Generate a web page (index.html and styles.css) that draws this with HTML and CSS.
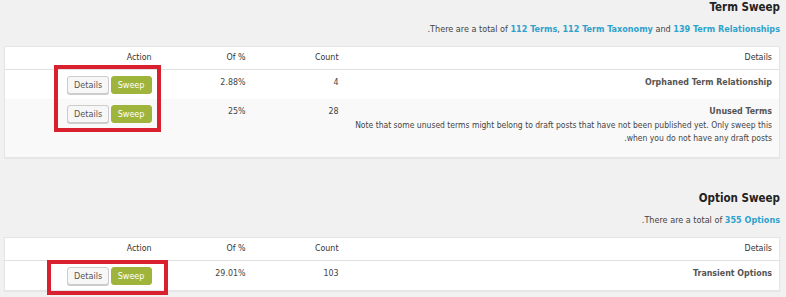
FILE: index.html
```html
<!DOCTYPE html>
<html lang="en" dir="rtl">
<head>
  <meta charset="UTF-8">
  <meta name="viewport" content="width=device-width, initial-scale=1.0">
  <title>WP-Sweep</title>
  <link rel="stylesheet" href="styles.css">
</head>
<body>
  <div class="wrap">
    <h3 class="section-title">Term Sweep</h3>
    <p class="summary">There are a total of <a href="#">112 Terms</a>, <a href="#">112 Term Taxonomy</a> and <a href="#">139 Term Relationships</a>.</p>
    <table class="widefat">
      <colgroup>
        <col class="col-details">
        <col class="col-count">
        <col class="col-percent">
        <col class="col-action">
      </colgroup>
      <thead>
        <tr>
          <th>Details</th>
          <th>Count</th>
          <th><span dir="ltr">Of %</span></th>
          <th>Action</th>
        </tr>
      </thead>
      <tbody>
        <tr>
          <td><strong>Orphaned Term Relationship</strong></td>
          <td>4</td>
          <td>2.88%</td>
          <td class="actions">
            <button class="btn btn-sweep">Sweep</button>
            <button class="btn btn-details">Details</button>
          </td>
        </tr>
        <tr class="alternate">
          <td>
            <strong>Unused Terms</strong>
            <p class="note">Note that some unused terms might belong to draft posts that have not been published yet. Only sweep this when you do not have any draft posts.</p>
          </td>
          <td>28</td>
          <td>25%</td>
          <td class="actions">
            <button class="btn btn-sweep">Sweep</button>
            <button class="btn btn-details">Details</button>
          </td>
        </tr>
      </tbody>
    </table>

    <h3 class="section-title next">Option Sweep</h3>
    <p class="summary">There are a total of <a href="#">355 Options</a>.</p>
    <table class="widefat">
      <colgroup>
        <col class="col-details">
        <col class="col-count">
        <col class="col-percent">
        <col class="col-action">
      </colgroup>
      <thead>
        <tr>
          <th>Details</th>
          <th>Count</th>
          <th><span dir="ltr">Of %</span></th>
          <th>Action</th>
        </tr>
      </thead>
      <tbody>
        <tr>
          <td><strong>Transient Options</strong></td>
          <td>103</td>
          <td>29.01%</td>
          <td class="actions">
            <button class="btn btn-sweep">Sweep</button>
            <button class="btn btn-details">Details</button>
          </td>
        </tr>
      </tbody>
    </table>

    <!-- highlight boxes drawn over the action buttons -->
    <div class="highlight highlight-terms"></div>
    <div class="highlight highlight-options"></div>
  </div>
</body>
</html>
```

FILE: styles.css
```css
html {
  background-color: #f1f1f1;
}

body {
  margin: 0;
  font-family: "DejaVu Sans Condensed", "DejaVu Sans", sans-serif;
  font-size: 9px;
  line-height: 13px;
  color: #444;
  overflow: hidden;
}

.wrap {
  position: relative;
  height: 297px;
  padding: 0 6px 0 5px;
}

.section-title {
  margin: 0;
  font-size: 11.5px;
  line-height: 14px;
  font-weight: bold;
  color: #222;
}

.section-title.next {
  margin-top: 33px;
}

.summary {
  margin: 8px 0 10px;
  line-height: 14px;
}

.summary a {
  color: #2ea2cc;
  font-weight: bold;
  text-decoration: none;
}

.widefat {
  width: 775px;
  table-layout: fixed;
  border-collapse: collapse;
  border: 1px solid #e5e5e5;
  background-color: #fff;
  box-shadow: 0 1px 1px rgba(0, 0, 0, 0.04);
  font-size: 8.8px;
}

.col-details {
  width: 434px;
}

.col-count {
  width: 93px;
}

.col-percent {
  width: 94px;
}

.col-action {
  width: 154px;
}

.widefat th {
  padding: 4px 7px 5px;
  text-align: right;
  font-weight: normal;
  color: #333;
  border-bottom: 1px solid #e1e1e1;
}

.widefat td {
  padding: 6px 7px 5px;
  vertical-align: top;
  text-align: right;
}

.widefat td strong {
  color: #555;
}

.widefat tr.alternate td {
  background-color: #f9f9f9;
}

.note {
  margin: 1px 0 7px;
  font-size: 8.5px;
}

.actions {
  white-space: nowrap;
}

.actions .btn {
  margin-left: -1px;
}

.btn {
  display: inline-block;
  height: 18px;
  padding: 0 6px;
  font-family: inherit;
  font-size: 9px;
  line-height: 16px;
  border-radius: 3px;
  border: 1px solid #ccc;
  vertical-align: top;
  cursor: pointer;
}

.btn-details {
  background-color: #f7f7f7;
  color: #555;
  box-shadow: 0 1px 0 #ccc;
}

.btn-sweep {
  background-color: #9fb43a;
  border-color: #9fb43a;
  color: #fff;
}

.highlight {
  position: absolute;
  border: 4px solid #d9202e;
}

.highlight-terms {
  left: 54px;
  top: 65px;
  width: 99px;
  height: 59px;
}

.highlight-options {
  left: 47px;
  top: 260px;
  width: 113px;
  height: 27px;
}
```
